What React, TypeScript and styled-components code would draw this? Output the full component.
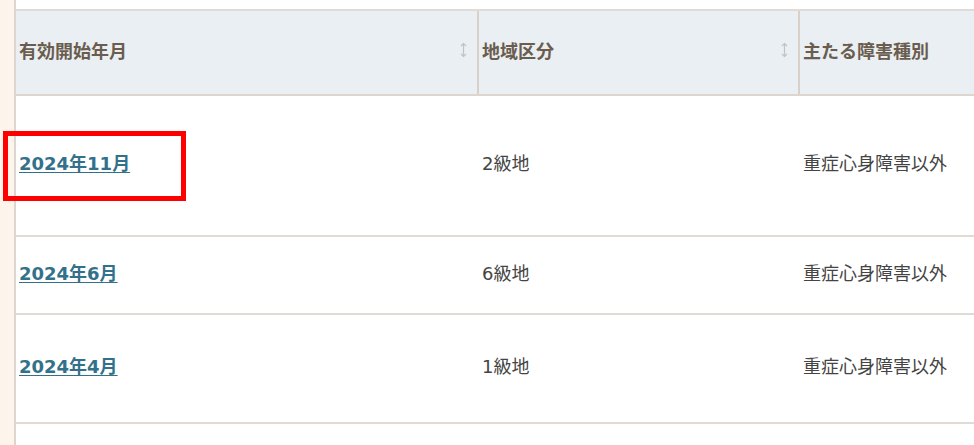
import styled, { createGlobalStyle } from "styled-components";

const GlobalStyle = createGlobalStyle`
  html, body {
    margin: 0;
    padding: 0;
    background: #ffffff;
    overflow: hidden;
  }
  body {
    font-family: "DejaVu Sans", "Noto Sans CJK JP", sans-serif;
  }
`;

const Page = styled.div`
  display: flex;
  width: 974px;
  height: 445px;
  position: relative;
  overflow: hidden;
`;

const SideStrip = styled.div`
  width: 14px;
  flex-shrink: 0;
  background: #fdf4ec;
`;

const Main = styled.div`
  flex: 1;
  border-left: 2px solid #ddd6d0;
  padding-top: 9px;
  background: #ffffff;
  overflow: hidden;
`;

const Grid = styled.div`
  width: 1110px;
`;

const Row = styled.div<{ $height: number; $header?: boolean }>`
  display: grid;
  grid-template-columns: 463px 321px 326px;
  height: ${(p) => p.$height}px;
  box-sizing: border-box;
  border-bottom: 2px solid #e0dbd6;
  ${(p) =>
    p.$header &&
    `
    background: #e9eff2;
    border-top: 2px solid #e0dbd6;
    border-bottom-color: #ddd6d0;
  `}
`;

const HeadCell = styled.div<{ $divider?: boolean }>`
  display: flex;
  align-items: center;
  justify-content: space-between;
  padding: 0 10px 5px 3px;
  box-sizing: border-box;
  border-right: ${(p) => (p.$divider ? "2px solid #d8d0c9" : "none")};
  font-size: 18px;
  font-weight: bold;
  color: #6a5c4f;
`;

const Cell = styled.div`
  display: flex;
  align-items: center;
  padding: 0 3px 7px;
  font-size: 18px;
  color: #444444;
`;

const DateLink = styled.a`
  font-weight: bold;
  color: #33718b;
  text-decoration: underline;
  text-underline-offset: 2px;
  text-decoration-thickness: 1px;
  cursor: pointer;
`;

const Highlight = styled.div`
  position: absolute;
  left: 3px;
  top: 131px;
  width: 183px;
  height: 70px;
  box-sizing: border-box;
  border: 5px solid #ff0000;
  pointer-events: none;
`;

const SortIcon = () => (
  <svg width="7" height="16" viewBox="0 0 7 16" fill="none">
    <path d="M3.5 1.5 V14.5" stroke="#c2c2c2" strokeWidth="1.2" />
    <path d="M1 4 L3.5 1.5 L6 4" stroke="#c2c2c2" strokeWidth="1.2" />
    <path d="M1 12 L3.5 14.5 L6 12" stroke="#c2c2c2" strokeWidth="1.2" />
  </svg>
);

const rows = [
  { date: "2024年11月", area: "2級地", kind: "重症心身障害以外", height: 141 },
  { date: "2024年6月", area: "6級地", kind: "重症心身障害以外", height: 78 },
  { date: "2024年4月", area: "1級地", kind: "重症心身障害以外", height: 109 },
];

export default function App() {
  return (
    <Page>
      <GlobalStyle />
      <SideStrip />
      <Main>
        <Grid>
          <Row $header $height={87}>
            <HeadCell $divider>
              <span>有効開始年月</span>
              <SortIcon />
            </HeadCell>
            <HeadCell $divider>
              <span>地域区分</span>
              <SortIcon />
            </HeadCell>
            <HeadCell>
              <span>主たる障害種別</span>
            </HeadCell>
          </Row>
          {rows.map((r) => (
            <Row key={r.date} $height={r.height}>
              <Cell>
                <DateLink>{r.date}</DateLink>
              </Cell>
              <Cell>{r.area}</Cell>
              <Cell>{r.kind}</Cell>
            </Row>
          ))}
          <Row $height={60} />
        </Grid>
      </Main>
      <Highlight />
    </Page>
  );
}
